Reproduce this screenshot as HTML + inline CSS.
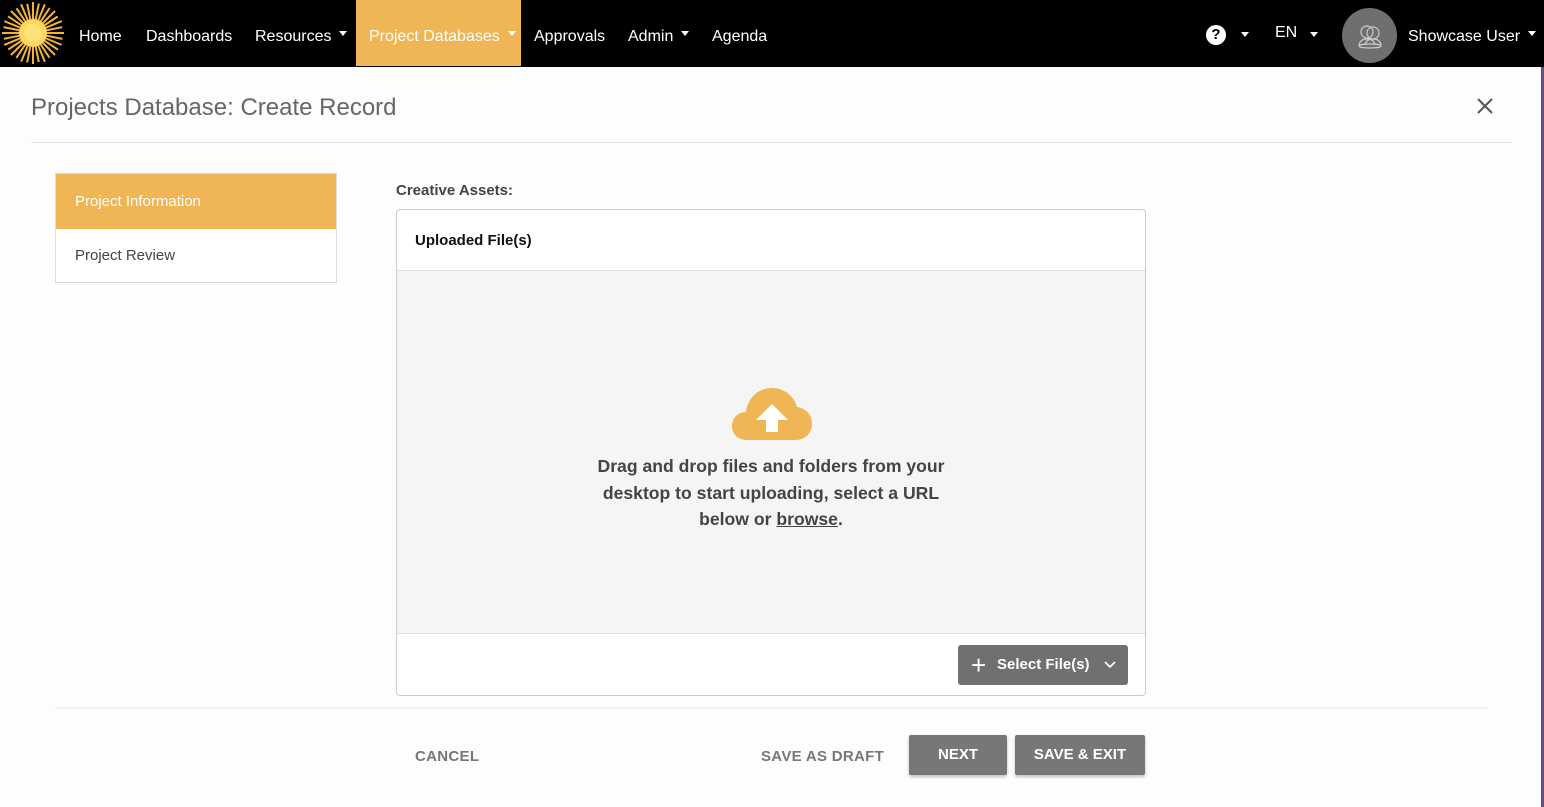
<!DOCTYPE html>
<html><head><meta charset="utf-8"><style>
*{box-sizing:border-box;margin:0;padding:0}
body{width:1544px;height:807px;overflow:hidden;background:#fdfdfd;font-family:"Liberation Sans",Arial,sans-serif;position:relative}
.nav{position:absolute;left:0;top:0;width:1544px;height:67px;background:#000}
.nav a{position:absolute;top:0;height:66px;line-height:73px;color:#fff;font-size:16px;text-decoration:none}
.car{display:inline-block;width:0;height:0;border-left:4px solid transparent;border-right:4px solid transparent;border-top:5px solid #fff;vertical-align:middle;margin-left:8px;position:relative;top:-3px}
.edge{position:absolute;right:0;top:67px;width:3px;height:740px;background:#6a4d86}
.title{position:absolute;left:31px;top:94px;font-size:24px;color:#666}
.hr1{position:absolute;left:31px;top:142px;width:1481px;height:1px;background:#e3e3e3}
.side{position:absolute;left:55px;top:173px;width:282px;height:110px;border:1px solid #ddd;background:#fff}
.side .a{height:55px;background:#f0b555;color:#fff;font-size:15px;line-height:55px;padding-left:19px}
.side .b{height:54px;color:#444;font-size:15px;line-height:54px;padding-left:19px}
.lbl{position:absolute;left:396px;top:182px;font-size:15px;font-weight:bold;color:#444}
.box{position:absolute;left:396px;top:209px;width:750px;height:487px;border:1px solid #ccc;border-radius:4px;background:#fff;overflow:hidden}
.box .h{height:61px;border-bottom:1px solid #ddd;font-size:15px;font-weight:bold;line-height:62px;padding-left:18px;color:#111}
.box .d{height:363px;background:#f5f5f6;border-bottom:1px solid #ddd;position:relative}
.msg{position:absolute;left:0;width:100%;top:182px;text-align:center;font-size:17.6px;font-weight:bold;color:#444;line-height:26.5px}
.sel{position:absolute;left:561px;top:435px;width:170px;height:40px;background:#707070;border-radius:3px;color:#fff;font-weight:bold;font-size:15px;line-height:40px}
.hr2{position:absolute;left:55px;top:707px;width:1433px;height:2px;background:#f0f0f0}
.btxt{position:absolute;font-size:15px;font-weight:bold;color:#777;letter-spacing:.3px}
.btn{position:absolute;top:735px;height:40px;background:#777;border-radius:2px;color:#fff;font-weight:bold;font-size:15px;text-align:center;line-height:40px;box-shadow:0 2px 3px rgba(0,0,0,.25)}
</style></head><body>
<div class="nav">
<svg style="position:absolute;left:0;top:0" width="67" height="67" viewBox="0 0 67 67">
<g transform="translate(33,33)" stroke="#f2b23c" stroke-width="2">
<line x1="0" y1="-31" x2="0" y2="31"/><line x1="-31" y1="0" x2="31" y2="0"/>
<line x1="-22" y1="-22" x2="22" y2="22"/><line x1="-22" y1="22" x2="22" y2="-22"/>
<g transform="rotate(11.25)"><line x1="0" y1="-30" x2="0" y2="30"/><line x1="-30" y1="0" x2="30" y2="0"/><line x1="-21" y1="-21" x2="21" y2="21"/><line x1="-21" y1="21" x2="21" y2="-21"/></g>
<g transform="rotate(22.5)"><line x1="0" y1="-31" x2="0" y2="31"/><line x1="-31" y1="0" x2="31" y2="0"/><line x1="-22" y1="-22" x2="22" y2="22"/><line x1="-22" y1="22" x2="22" y2="-22"/></g>
<g transform="rotate(33.75)"><line x1="0" y1="-30" x2="0" y2="30"/><line x1="-30" y1="0" x2="30" y2="0"/><line x1="-21" y1="-21" x2="21" y2="21"/><line x1="-21" y1="21" x2="21" y2="-21"/></g>
<circle r="14" fill="#fbd860" stroke="none"/><circle r="9" fill="#fde27a" stroke="none"/>
</g></svg>
<a style="left:79px">Home</a>
<a style="left:146px">Dashboards</a>
<a style="left:255px">Resources<span class="car"></span></a>
<a style="left:356px;width:165px;background:#f0b555;padding-left:13px;height:66px">Project Databases<span class="car"></span></a>
<a style="left:534px">Approvals</a>
<a style="left:628px">Admin<span class="car"></span></a>
<a style="left:712px">Agenda</a>
<div style="position:absolute;left:1206px;top:25px;width:20px;height:20px;border-radius:50%;background:#fff;color:#000;font-weight:bold;font-size:15px;text-align:center;line-height:20px">?</div>
<span class="car" style="position:absolute;left:1233px;top:32px"></span>
<a style="left:1275px;line-height:66px">EN</a><span class="car" style="position:absolute;left:1302px;top:32px"></span>
<div style="position:absolute;left:1342px;top:8px;width:55px;height:55px;border-radius:50%;background:#6f6f6f">
<svg width="55" height="55" viewBox="0 0 55 55" fill="none" stroke="#ccc" stroke-width="1.2"><circle cx="25" cy="24" r="6"/><circle cx="31" cy="25" r="6"/><path d="M17 37c1-5 5-6 8-6s7 1 8 6M23 37c1-5 5-6 8-6s7 1 8 6"/><ellipse cx="28" cy="38" rx="11" ry="2"/></svg></div>
<a style="left:1408px">Showcase User<span class="car"></span></a>
</div>
<div class="edge"></div>
<div class="title">Projects Database: Create Record</div>
<svg style="position:absolute;left:1476px;top:97px" width="18" height="18"><path d="M2 2L16 16M16 2L2 16" stroke="#555" stroke-width="2"/></svg>
<div class="hr1"></div>
<div class="side"><div class="a">Project Information</div><div class="b">Project Review</div></div>
<div class="lbl">Creative Assets:</div>
<div class="box">
<div class="h">Uploaded File(s)</div>
<div class="d">
<svg style="position:absolute;left:335px;top:115px" width="80" height="55" viewBox="0 0 80 55"><path d="M15 54C5 54 0 47 0 40c0-8 6-14 14-14C16 11 27 2 40 2c12 0 22 8 25 19 9 1 15 8 15 17 0 9-7 16-16 16z" fill="#f0b555"/><path d="M38 18l-16 16h10v12h12V34h10z" fill="#fff" transform="translate(2,0)"/></svg>
<div class="msg">Drag and drop files and folders from your<br>desktop to start uploading, select a URL<br>below or <u>browse</u>.</div>
</div>
<div class="sel"><span style="position:absolute;left:13px;top:0;font-size:26px;font-weight:normal">+</span><span style="position:absolute;left:39px">Select File(s)</span><svg style="position:absolute;left:146px;top:15px" width="12" height="10"><path d="M1 2l5 5 5-5" stroke="#fff" stroke-width="1.6" fill="none"/></svg></div>
</div>
<div class="hr2"></div>
<div class="btxt" style="left:415px;top:748px">CANCEL</div>
<div class="btxt" style="left:761px;top:748px">SAVE AS DRAFT</div>
<div class="btn" style="left:909px;width:98px">NEXT</div>
<div class="btn" style="left:1015px;width:130px">SAVE &amp; EXIT</div>
</body></html>
